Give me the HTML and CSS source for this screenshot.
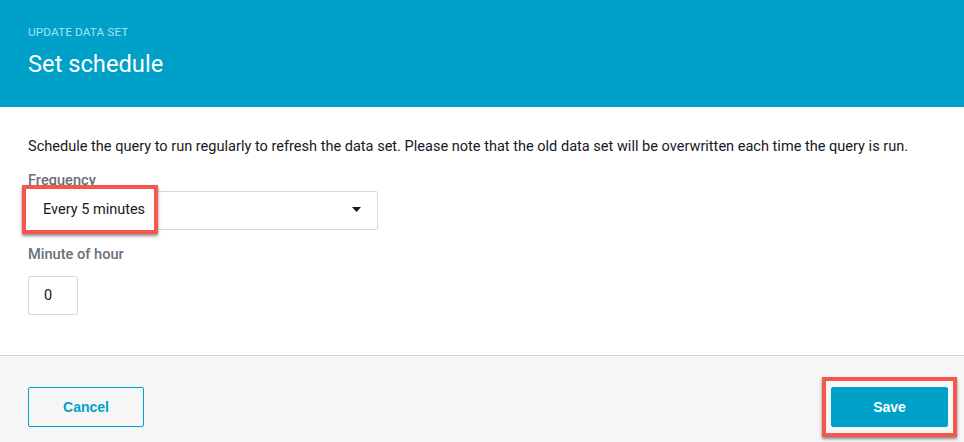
FILE: index.html
```html
<!DOCTYPE html>
<html>
<head>
<meta charset="utf-8">
<link rel="stylesheet" href="styles.css">
</head>
<body>
<div class="modal">
  <header class="hdr">
    <div class="eyebrow">UPDATE DATA SET</div>
    <h1 class="title">Set schedule</h1>
  </header>
  <section class="content">
    <p class="desc">Schedule the query to run regularly to refresh the data set. Please note that the old data set will be overwritten each time the query is run.</p>
    <label class="label">Frequency</label>
    <div class="select-wrap">
      <div class="select">
        <span class="select-text">Every 5 minutes</span>
        <svg class="caret" width="9" height="5" viewBox="0 0 9 5"><path d="M0 0h9L4.5 5z" fill="#16191f"/></svg>
      </div>
      <div class="highlight hl-freq"><span class="hl-text">Every 5 minutes</span></div>
    </div>
    <label class="label label-minute">Minute of hour</label>
    <div class="num-input">0</div>
  </section>
  <footer class="ftr">
    <button class="btn btn-cancel">Cancel</button>
    <div class="save-wrap">
      <button class="btn btn-save">Save</button>
      <div class="highlight hl-save"></div>
    </div>
  </footer>
</div>
</body>
</html>
```
FILE: styles.css
```css
* { box-sizing: border-box; }
html, body { margin: 0; padding: 0; background: #fff; }
body { font-family: Roboto, "Liberation Sans", sans-serif; color: #16191f; }
.modal { width: 964px; height: 442px; display: flex; flex-direction: column; overflow: hidden; }
.hdr { background: #00a1c9; height: 107px; padding: 25px 28px 0; }
.eyebrow { color: #a8e1f0; font-size: 11.8px; line-height: 14px; letter-spacing: 0.1px; }
.title { margin: 11px 0 0; color: #fff; font-weight: 400; font-size: 23.7px; line-height: 28px; }
.content { flex: 1; padding: 32px 28px 0; }
.desc { margin: 0; font-size: 14.55px; line-height: 16px; color: #16191f; }
.label { display: block; margin-top: 17px; font-size: 14.6px; line-height: 16px; font-weight: 500; color: #687078; }
.label-minute { margin-top: 16px; }
.select-wrap { position: relative; width: 350px; margin-top: 3px; }
.select { height: 39px; border: 1px solid #d5dbdb; border-radius: 2px; display: flex; align-items: center; justify-content: space-between; padding: 0 16px 0 15px; background: #fff; }
.select-text { font-size: 14.5px; color: #16191f; }
.caret { display: block; margin-top: -2px; }
.highlight { position: absolute; border: 4px solid #f4584c; box-shadow: 0 2px 3px rgba(0,0,0,0.45); }
.hl-freq { left: -6px; top: -6px; width: 136px; height: 49px; background: #fff; display: flex; align-items: center; padding-left: 17px; }
.hl-text { font-size: 14.5px; color: #16191f; }
.num-input { margin-top: 14px; width: 50px; height: 39px; border: 1px solid #d5dbdb; border-radius: 2px; font-size: 14.5px; line-height: 37px; padding-left: 15px; color: #16191f; }
.ftr { height: 87px; background: #f6f6f6; border-top: 1px solid #cfd4d4; display: flex; justify-content: space-between; align-items: flex-start; padding: 31px 16px 0 28px; }
.btn { height: 40px; border-radius: 2px; font-family: "Liberation Sans", Arial, sans-serif; font-weight: 700; font-size: 14px; cursor: pointer; }
.btn-cancel { width: 116px; background: transparent; border: 1px solid #00a1c9; color: #00a1c9; }
.save-wrap { position: relative; }
.btn-save { display: block; width: 117px; background: #00a1c9; border: 1px solid #00a1c9; color: #fff; }
.hl-save { left: -9px; top: -10px; width: 135px; height: 60px; background: transparent; }
```
